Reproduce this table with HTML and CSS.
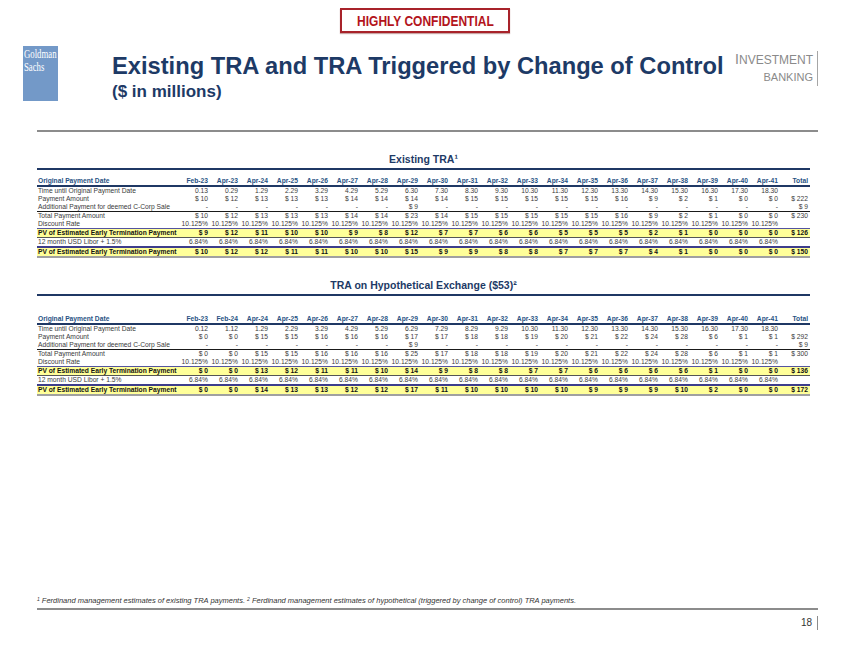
FILE: index.html
```html
<!DOCTYPE html>
<html lang="en">
<head>
<meta charset="utf-8">
<title>Existing TRA and TRA Triggered by Change of Control</title>
<link rel="stylesheet" href="styles.css">
</head>
<body>
<div class="page">
  <div class="banner"><div class="conf"><span class="conf-text">HIGHLY CONFIDENTIAL</span></div></div>

  <header class="head">
    <div class="logo"><span class="logo-word">Goldman</span><span class="logo-word">Sachs</span></div>
    <div class="titles">
      <h1 class="title">Existing TRA and TRA Triggered by Change of Control</h1>
      <h2 class="subtitle">($ in millions)</h2>
    </div>
    <div class="ib">
      <div class="ib-line"><span class="ib-big">I</span>NVESTMENT</div>
      <div class="ib-line">BANKING</div>
    </div>
  </header>

  <div class="rule-gray"></div>

  <section class="sec sec-first">
    <div class="sec-title">Existing TRA¹</div>
    <div class="sec-rule"></div>
    <table class="tra">
      <colgroup><col class="c-label"><col span="21" class="c-val"></colgroup>
      <tr class="r-hdr"><td class="lbl">Original Payment Date</td><td>Feb-23</td><td>Apr-23</td><td>Apr-24</td><td>Apr-25</td><td>Apr-26</td><td>Apr-27</td><td>Apr-28</td><td>Apr-29</td><td>Apr-30</td><td>Apr-31</td><td>Apr-32</td><td>Apr-33</td><td>Apr-34</td><td>Apr-35</td><td>Apr-36</td><td>Apr-37</td><td>Apr-38</td><td>Apr-39</td><td>Apr-40</td><td>Apr-41</td><td>Total</td></tr>
      <tr><td class="lbl">Time until Original Payment Date</td><td>0.13</td><td>0.29</td><td>1.29</td><td>2.29</td><td>3.29</td><td>4.29</td><td>5.29</td><td>6.30</td><td>7.30</td><td>8.30</td><td>9.30</td><td>10.30</td><td>11.30</td><td>12.30</td><td>13.30</td><td>14.30</td><td>15.30</td><td>16.30</td><td>17.30</td><td>18.30</td><td></td></tr>
      <tr><td class="lbl">Payment Amount</td><td>$ 10</td><td>$ 12</td><td>$ 13</td><td>$ 13</td><td>$ 13</td><td>$ 14</td><td>$ 14</td><td>$ 14</td><td>$ 14</td><td>$ 15</td><td>$ 15</td><td>$ 15</td><td>$ 15</td><td>$ 15</td><td>$ 16</td><td>$ 9</td><td>$ 2</td><td>$ 1</td><td>$ 0</td><td>$ 0</td><td>$ 222</td></tr>
      <tr><td class="lbl">Additional Payment for deemed C-Corp Sale</td><td>-</td><td>-</td><td>-</td><td>-</td><td>-</td><td>-</td><td>-</td><td>$ 9</td><td>-</td><td>-</td><td>-</td><td>-</td><td>-</td><td>-</td><td>-</td><td>-</td><td>-</td><td>-</td><td>-</td><td>-</td><td>$ 9</td></tr>
      <tr class="r-total"><td class="lbl">Total Payment Amount</td><td>$ 10</td><td>$ 12</td><td>$ 13</td><td>$ 13</td><td>$ 13</td><td>$ 14</td><td>$ 14</td><td>$ 23</td><td>$ 14</td><td>$ 15</td><td>$ 15</td><td>$ 15</td><td>$ 15</td><td>$ 15</td><td>$ 16</td><td>$ 9</td><td>$ 2</td><td>$ 1</td><td>$ 0</td><td>$ 0</td><td>$ 230</td></tr>
      <tr><td class="lbl">Discount Rate</td><td>10.125%</td><td>10.125%</td><td>10.125%</td><td>10.125%</td><td>10.125%</td><td>10.125%</td><td>10.125%</td><td>10.125%</td><td>10.125%</td><td>10.125%</td><td>10.125%</td><td>10.125%</td><td>10.125%</td><td>10.125%</td><td>10.125%</td><td>10.125%</td><td>10.125%</td><td>10.125%</td><td>10.125%</td><td>10.125%</td><td></td></tr>
      <tr class="r-pv"><td class="lbl">PV of Estimated Early Termination Payment</td><td>$ 9</td><td>$ 12</td><td>$ 11</td><td>$ 10</td><td>$ 10</td><td>$ 9</td><td>$ 8</td><td>$ 12</td><td>$ 7</td><td>$ 7</td><td>$ 6</td><td>$ 6</td><td>$ 5</td><td>$ 5</td><td>$ 5</td><td>$ 2</td><td>$ 1</td><td>$ 0</td><td>$ 0</td><td>$ 0</td><td>$ 126</td></tr>
      <tr class="r-libor"><td class="lbl">12 month USD Libor + 1.5%</td><td>6.84%</td><td>6.84%</td><td>6.84%</td><td>6.84%</td><td>6.84%</td><td>6.84%</td><td>6.84%</td><td>6.84%</td><td>6.84%</td><td>6.84%</td><td>6.84%</td><td>6.84%</td><td>6.84%</td><td>6.84%</td><td>6.84%</td><td>6.84%</td><td>6.84%</td><td>6.84%</td><td>6.84%</td><td>6.84%</td><td></td></tr>
      <tr class="r-pv2"><td class="lbl">PV of Estimated Early Termination Payment</td><td>$ 10</td><td>$ 12</td><td>$ 12</td><td>$ 11</td><td>$ 11</td><td>$ 10</td><td>$ 10</td><td>$ 15</td><td>$ 9</td><td>$ 9</td><td>$ 8</td><td>$ 8</td><td>$ 7</td><td>$ 7</td><td>$ 7</td><td>$ 4</td><td>$ 1</td><td>$ 0</td><td>$ 0</td><td>$ 0</td><td>$ 150</td></tr>
    </table>
  </section>

  <section class="sec sec-second">
    <div class="sec-title">TRA on Hypothetical Exchange ($53)²</div>
    <div class="sec-rule"></div>
    <table class="tra tra-2">
      <colgroup><col class="c-label"><col span="21" class="c-val"></colgroup>
      <tr class="r-hdr"><td class="lbl">Original Payment Date</td><td>Feb-23</td><td>Feb-24</td><td>Apr-24</td><td>Apr-25</td><td>Apr-26</td><td>Apr-27</td><td>Apr-28</td><td>Apr-29</td><td>Apr-30</td><td>Apr-31</td><td>Apr-32</td><td>Apr-33</td><td>Apr-34</td><td>Apr-35</td><td>Apr-36</td><td>Apr-37</td><td>Apr-38</td><td>Apr-39</td><td>Apr-40</td><td>Apr-41</td><td>Total</td></tr>
      <tr><td class="lbl">Time until Original Payment Date</td><td>0.12</td><td>1.12</td><td>1.29</td><td>2.29</td><td>3.29</td><td>4.29</td><td>5.29</td><td>6.29</td><td>7.29</td><td>8.29</td><td>9.29</td><td>10.30</td><td>11.30</td><td>12.30</td><td>13.30</td><td>14.30</td><td>15.30</td><td>16.30</td><td>17.30</td><td>18.30</td><td></td></tr>
      <tr><td class="lbl">Payment Amount</td><td>$ 0</td><td>$ 0</td><td>$ 15</td><td>$ 15</td><td>$ 16</td><td>$ 16</td><td>$ 16</td><td>$ 17</td><td>$ 17</td><td>$ 18</td><td>$ 18</td><td>$ 19</td><td>$ 20</td><td>$ 21</td><td>$ 22</td><td>$ 24</td><td>$ 28</td><td>$ 6</td><td>$ 1</td><td>$ 1</td><td>$ 292</td></tr>
      <tr><td class="lbl">Additional Payment for deemed C-Corp Sale</td><td>-</td><td>-</td><td>-</td><td>-</td><td>-</td><td>-</td><td>-</td><td>$ 9</td><td>-</td><td>-</td><td>-</td><td>-</td><td>-</td><td>-</td><td>-</td><td>-</td><td>-</td><td>-</td><td>-</td><td>-</td><td>$ 9</td></tr>
      <tr class="r-total"><td class="lbl">Total Payment Amount</td><td>$ 0</td><td>$ 0</td><td>$ 15</td><td>$ 15</td><td>$ 16</td><td>$ 16</td><td>$ 16</td><td>$ 25</td><td>$ 17</td><td>$ 18</td><td>$ 18</td><td>$ 19</td><td>$ 20</td><td>$ 21</td><td>$ 22</td><td>$ 24</td><td>$ 28</td><td>$ 6</td><td>$ 1</td><td>$ 1</td><td>$ 300</td></tr>
      <tr><td class="lbl">Discount Rate</td><td>10.125%</td><td>10.125%</td><td>10.125%</td><td>10.125%</td><td>10.125%</td><td>10.125%</td><td>10.125%</td><td>10.125%</td><td>10.125%</td><td>10.125%</td><td>10.125%</td><td>10.125%</td><td>10.125%</td><td>10.125%</td><td>10.125%</td><td>10.125%</td><td>10.125%</td><td>10.125%</td><td>10.125%</td><td>10.125%</td><td></td></tr>
      <tr class="r-pv"><td class="lbl">PV of Estimated Early Termination Payment</td><td>$ 0</td><td>$ 0</td><td>$ 13</td><td>$ 12</td><td>$ 11</td><td>$ 11</td><td>$ 10</td><td>$ 14</td><td>$ 9</td><td>$ 8</td><td>$ 8</td><td>$ 7</td><td>$ 7</td><td>$ 6</td><td>$ 6</td><td>$ 6</td><td>$ 6</td><td>$ 1</td><td>$ 0</td><td>$ 0</td><td>$ 136</td></tr>
      <tr class="r-libor"><td class="lbl">12 month USD Libor + 1.5%</td><td>6.84%</td><td>6.84%</td><td>6.84%</td><td>6.84%</td><td>6.84%</td><td>6.84%</td><td>6.84%</td><td>6.84%</td><td>6.84%</td><td>6.84%</td><td>6.84%</td><td>6.84%</td><td>6.84%</td><td>6.84%</td><td>6.84%</td><td>6.84%</td><td>6.84%</td><td>6.84%</td><td>6.84%</td><td>6.84%</td><td></td></tr>
      <tr class="r-pv2"><td class="lbl">PV of Estimated Early Termination Payment</td><td>$ 0</td><td>$ 0</td><td>$ 14</td><td>$ 13</td><td>$ 13</td><td>$ 12</td><td>$ 12</td><td>$ 17</td><td>$ 11</td><td>$ 10</td><td>$ 10</td><td>$ 10</td><td>$ 10</td><td>$ 9</td><td>$ 9</td><td>$ 9</td><td>$ 10</td><td>$ 2</td><td>$ 0</td><td>$ 0</td><td>$ 172</td></tr>
    </table>
  </section>

  <footer class="foot">
    <p class="footnote"><span class="fn-mark">1</span> Ferdinand management estimates of existing TRA payments. <span class="fn-mark">2</span> Ferdinand management estimates of hypothetical (triggered by change of control) TRA payments.</p>
    <div class="rule-gray rule-foot"></div>
    <div class="pageno"><span class="pageno-num">18</span></div>
  </footer>
</div>
</body>
</html>
```

FILE: styles.css
```css
* { box-sizing: border-box; }
html, body { margin: 0; padding: 0; background: #ffffff; }
body { font-family: "Liberation Sans", Arial, sans-serif; color: #333; }

.page {
  width: 850px;
  height: 656px;
  display: flex;
  flex-direction: column;
  overflow: hidden;
}

/* confidential banner */
.banner {
  display: flex;
  justify-content: center;
  padding-top: 8px;
}
.conf {
  width: 170px;
  height: 25px;
  border: 2px solid #a8232a;
  box-shadow: 0 1px 1px #c9a5a5;
  display: flex;
  align-items: center;
  justify-content: center;
  overflow: hidden;
}
.conf-text {
  display: inline-block;
  color: #b3141c;
  font-weight: bold;
  font-size: 15px;
  line-height: 16px;
  white-space: nowrap;
  transform: scaleX(0.8);
}

/* header */
.head {
  display: flex;
  align-items: flex-start;
  margin-top: 13px;
  padding-left: 23px;
  padding-right: 32px;
}
.logo {
  width: 35px;
  height: 55px;
  background: #7399c8;
  flex: none;
  padding: 2px 0 0 1px;
  overflow: hidden;
  display: flex;
  flex-direction: column;
  align-items: flex-start;
}
.logo-word {
  display: block;
  color: #ffffff;
  font-family: "Liberation Serif", "DejaVu Serif", serif;
  font-size: 11.5px;
  line-height: 13px;
  transform: scaleX(0.76);
  transform-origin: left top;
  white-space: nowrap;
}
.titles {
  margin-left: 54px;
  padding-top: 6px;
}
.title {
  margin: 0;
  font-size: 23.7px;
  line-height: 28px;
  font-weight: bold;
  color: #1d3a66;
  white-space: nowrap;
}
.subtitle {
  margin: 2px 0 0;
  font-size: 17px;
  line-height: 20px;
  font-weight: bold;
  color: #1d3a66;
}
.ib {
  margin-left: auto;
  margin-top: 5px;
  padding-right: 4px;
  border-right: 1px solid #a6a6a6;
  text-align: right;
  color: #8a8a8a;
  font-size: 12px;
  line-height: 17px;
}
.ib-line { white-space: nowrap; }
.ib-line + .ib-line { font-size: 11px; }
.ib-big { font-size: 14px; }

/* rules */
.rule-gray {
  height: 2px;
  background: #8c8c8c;
  margin: 28px 32px 0 37px;
}

/* sections */
.sec {
  margin-left: 37px;
  width: 773px;
}
.sec-first { margin-top: 21px; }
.sec-second { margin-top: 21px; }
.sec-title {
  text-align: center;
  font-weight: bold;
  font-size: 10.5px;
  line-height: 12px;
  color: #1d3a66;
}
.sec-rule {
  height: 2px;
  background: #1f3864;
  margin-top: 3px;
}

/* tables */
.tra {
  width: 773px;
  table-layout: fixed;
  border-collapse: separate;
  border-spacing: 0;
  margin-top: 7px;
  font-size: 6.7px;
  line-height: 8px;
  color: #3a3a3a;
}
.tra-2 { margin-top: 19px; }
.c-label { width: 143px; }
.c-val { width: 30px; }
.tra td {
  padding: 0 2px 0 0;
  text-align: right;
  white-space: nowrap;
  overflow: visible;
}
.tra td.lbl { text-align: left; padding-left: 1px; }

.r-hdr td {
  font-weight: bold;
  color: #285283;
  border-bottom: 2px solid #1f3864;
}
.r-total td { border-top: 1px solid #1a1a1a; }
.r-pv td {
  border-top: 1px solid #5454a0;
  background: #ffff99;
  font-weight: bold;
  color: #111;
}
.r-libor td { border-top: 1px solid #555; }
.r-pv2 td {
  border-top: 2px solid #3d3d8c;
  border-bottom: 2px solid #a0a0a0;
  background: #ffff99;
  font-weight: bold;
  color: #111;
}

/* footer */
.foot {
  margin-top: auto;
  padding-bottom: 26px;
}
.footnote {
  margin: 0;
  padding-left: 37px;
  font-size: 7.5px;
  line-height: 8px;
  font-style: italic;
  color: #333;
  white-space: nowrap;
}
.fn-mark {
  font-size: 5px;
  vertical-align: 2px;
  line-height: 0;
}
.rule-foot { margin-top: 3px; }
.pageno {
  margin-top: 2px;
  padding-right: 32px;
  text-align: right;
}
.pageno-num {
  display: inline-block;
  padding-right: 5px;
  border-right: 1px solid #8c8c8c;
  font-size: 10px;
  line-height: 14px;
  color: #333;
}
```
